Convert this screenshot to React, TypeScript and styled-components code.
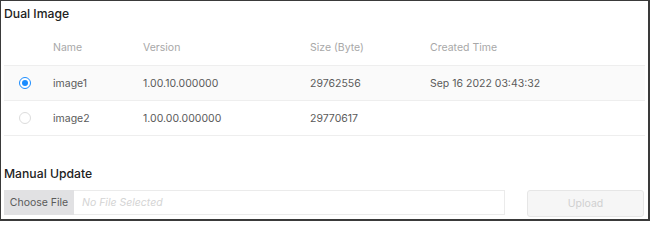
import { styled, createGlobalStyle } from "styled-components";

const GlobalStyle = createGlobalStyle`
  html, body {
    margin: 0;
    padding: 0;
    background: #ffffff;
  }
  body {
    font-family: Inter, "Noto Sans", "Liberation Sans", sans-serif;
    color: #333333;
  }
`;

const Frame = styled.div`
  box-sizing: border-box;
  width: 650px;
  height: 221px;
  border-style: solid;
  border-color: #3a3a3a;
  border-width: 1px 2px 2px 1px;
  padding: 0 3px 0 3px;
  overflow: hidden;
`;

const Title = styled.h2<{ $gap?: number }>`
  margin: ${(p) => p.$gap ?? 4}px 0 0 0;
  font-size: 12.2px;
  font-weight: 500;
  line-height: 18px;
  color: #222222;
`;

const Table = styled.div`
  margin-top: 7px;
  display: flex;
  flex-direction: column;
`;

const Row = styled.div<{ $head?: boolean; $active?: boolean }>`
  display: grid;
  grid-template-columns: 49px 90px 167px 120px 1fr;
  align-items: center;
  height: ${(p) => (p.$head ? 35 : 34)}px;
  font-size: 10.5px;
  color: ${(p) => (p.$head ? "#a8a8a8" : "#5a5a5a")};
  background: ${(p) => (p.$active ? "#fafafa" : "#ffffff")};
  border-bottom: ${(p) => (p.$head ? "none" : "1px solid #eeeeee")};
  &:nth-child(2) {
    border-top: 1px solid #eeeeee;
    height: 34px;
  }
`;

const Cell = styled.div`
  white-space: nowrap;
`;

const Radio = styled.span<{ $checked?: boolean }>`
  box-sizing: border-box;
  display: block;
  width: 12px;
  height: 12px;
  margin-left: 15px;
  border-radius: 50%;
  border: 1px solid ${(p) => (p.$checked ? "#1a8cff" : "#dcdcdc")};
  background: #ffffff;
  position: relative;
  &::after {
    content: "";
    display: ${(p) => (p.$checked ? "block" : "none")};
    position: absolute;
    left: 2px;
    top: 2px;
    width: 6px;
    height: 6px;
    border-radius: 50%;
    background: #1a8cff;
  }
`;

const UploadBar = styled.div`
  margin-top: 7px;
  display: flex;
  align-items: flex-start;
  gap: 22px;
`;

const FileField = styled.div`
  box-sizing: border-box;
  width: 501px;
  height: 25px;
  display: flex;
  align-items: stretch;
  border: 1px solid #ebebeb;
  border-left: none;
  font-size: 10.5px;
`;

const ChooseButton = styled.div`
  width: 70px;
  background: #e1e1e3;
  color: #5a5a5a;
  display: flex;
  align-items: center;
  justify-content: center;
  margin-top: -1px;
  margin-bottom: -1px;
`;

const Placeholder = styled.div`
  display: flex;
  align-items: center;
  padding-left: 8px;
  font-style: italic;
  color: #d4d4d4;
`;

const UploadButton = styled.div`
  box-sizing: border-box;
  width: 117px;
  height: 27px;
  border: 1px solid #e6e6e6;
  border-radius: 3px;
  background: #f6f6f6;
  color: #d0d0d0;
  font-size: 10.5px;
  display: flex;
  align-items: center;
  justify-content: center;
`;

const images = [
  { name: "image1", version: "1.00.10.000000", size: "29762556", created: "Sep 16 2022 03:43:32", active: true },
  { name: "image2", version: "1.00.00.000000", size: "29770617", created: "", active: false },
];

export default function App() {
  return (
    <>
      <GlobalStyle />
      <Frame>
        <Title>Dual Image</Title>
        <Table>
          <Row $head>
            <Cell />
            <Cell>Name</Cell>
            <Cell>Version</Cell>
            <Cell>Size (Byte)</Cell>
            <Cell>Created Time</Cell>
          </Row>
          {images.map((img) => (
            <Row key={img.name} $active={img.active}>
              <Cell>
                <Radio $checked={img.active} />
              </Cell>
              <Cell>{img.name}</Cell>
              <Cell>{img.version}</Cell>
              <Cell>{img.size}</Cell>
              <Cell>{img.created}</Cell>
            </Row>
          ))}
        </Table>
        <Title $gap={29}>Manual Update</Title>
        <UploadBar>
          <FileField>
            <ChooseButton>Choose File</ChooseButton>
            <Placeholder>No File Selected</Placeholder>
          </FileField>
          <UploadButton>Upload</UploadButton>
        </UploadBar>
      </Frame>
    </>
  );
}
